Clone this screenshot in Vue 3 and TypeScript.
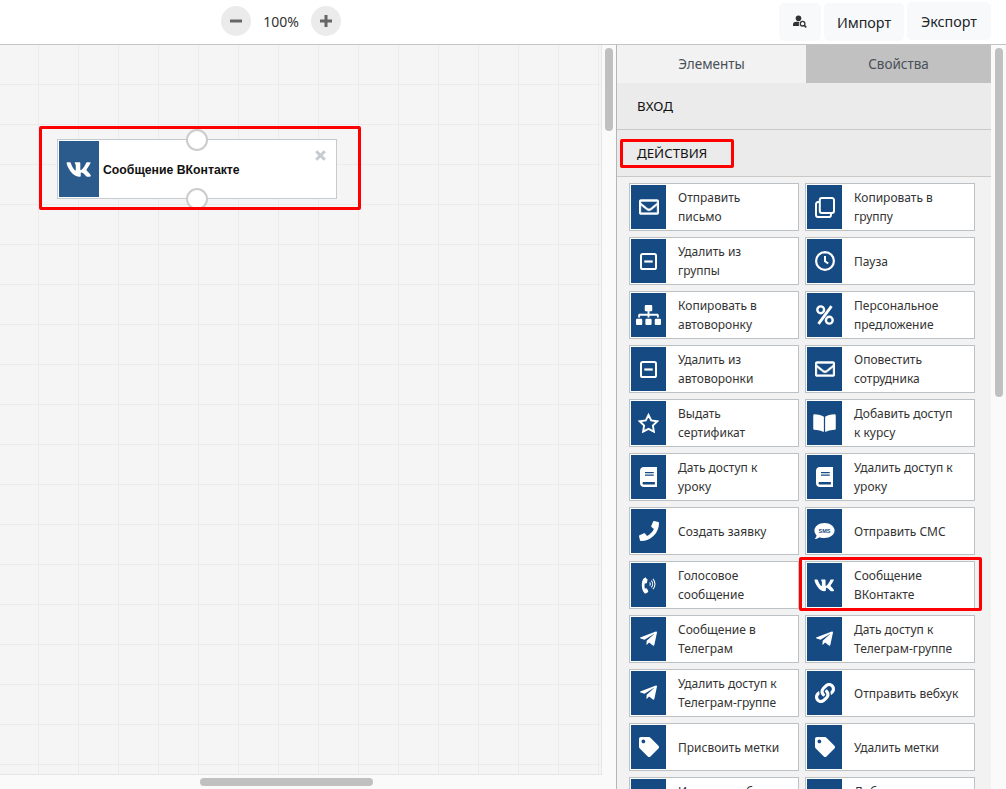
<script setup lang="ts">
interface Part { d: string; stroke?: number; bold?: number }
interface Icon { vb: string; w: number; h: number; parts: Part[]; sms?: boolean }

const envelope: Icon = { vb: '0 0 512 512', w: 20, h: 20, parts: [{ bold: 12, d: 'M464 64H48C21.49 64 0 85.49 0 112v288c0 26.51 21.49 48 48 48h416c26.51 0 48-21.49 48-48V112c0-26.51-21.49-48-48-48zm0 48v40.805c-22.422 18.259-58.168 46.651-134.587 106.49-16.841 13.247-50.201 45.072-73.413 44.701-23.208.375-56.579-31.459-73.413-44.701C106.18 199.465 70.425 171.067 48 152.805V112h416zM48 400V214.398c22.914 18.251 55.409 43.862 104.938 82.646 21.857 17.205 60.134 55.186 103.062 54.955 42.717.231 80.509-37.199 103.053-54.947 49.528-38.783 82.032-64.401 104.947-82.653V400H48z' }] }
const copy: Icon = { vb: '0 0 20 21', w: 20, h: 21, parts: [{ d: 'M6.800 1.100h10.200a2 2 0 0 1 2 2v10.800a2 2 0 0 1-2 2H6.800a2 2 0 0 1-2-2V3.100a2 2 0 0 1 2-2z', stroke: 2 }, { d: 'M4.800 5.100H3a2 2 0 0 0-2 2v11a2 2 0 0 0 2 2h11a2 2 0 0 0 2-2v-2.200', stroke: 2 }] }
const minus: Icon = { vb: '0 0 17 17', w: 17, h: 17, parts: [{ d: 'M2.600 1h11.800a1.600 1.600 0 0 1 1.600 1.600v11.800a1.600 1.600 0 0 1-1.600 1.600H2.600A1.600 1.600 0 0 1 1 14.400V2.600A1.600 1.600 0 0 1 2.600 1z', stroke: 2 }, { d: 'M4.300 8.500h8.400', stroke: 2.200 }] }
const clock: Icon = { vb: '0 0 20 20', w: 20, h: 20, parts: [{ d: 'M10 1.100a8.900 8.900 0 1 0 0 17.800a8.900 8.900 0 0 0 0-17.800z', stroke: 2.200 }, { d: 'M10 5v5.300l3.200 2.200', stroke: 2 }] }
const sitemap: Icon = { vb: '0 0 640 512', w: 25, h: 20, parts: [{ d: 'M128 352H32c-17.67 0-32 14.33-32 32v96c0 17.67 14.33 32 32 32h96c17.67 0 32-14.33 32-32v-96c0-17.67-14.33-32-32-32zm-24-80h192v48h48v-48h192v48h48v-57.59c0-21.17-17.23-38.41-38.41-38.41H344v-64h40c17.67 0 32-14.33 32-32V32c0-17.67-14.33-32-32-32H256c-17.67 0-32 14.33-32 32v96c0 17.67 14.33 32 32 32h40v64H94.41C73.23 224 56 241.23 56 262.41V320h48v-48zm264 80h-96c-17.67 0-32 14.33-32 32v96c0 17.67 14.33 32 32 32h96c17.67 0 32-14.33 32-32v-96c0-17.67-14.33-32-32-32zm240 0h-96c-17.67 0-32 14.33-32 32v96c0 17.67 14.33 32 32 32h96c17.67 0 32-14.33 32-32v-96c0-17.67-14.33-32-32-32z' }] }
const percent: Icon = { vb: '0 0 18 20', w: 18, h: 20, parts: [{ d: 'M4.700 1.400a3.400 3.400 0 1 0 0 6.800a3.400 3.400 0 0 0 0-6.800zM13.300 11.800a3.400 3.400 0 1 0 0 6.800a3.400 3.400 0 0 0 0-6.800z', stroke: 2.400 }, { d: 'M15.500 1.200L2.500 18.800', stroke: 2.800 }] }
const star: Icon = { vb: '0 0 22 21', w: 21, h: 20, parts: [{ d: 'M11 2l2.800 5.800 6.400.9-4.600 4.500 1.100 6.400L11 16.600l-5.700 3 1.100-6.400L1.800 8.700l6.400-.9z', stroke: 2 }] }
const bookOpen: Icon = { vb: '0 0 576 512', w: 23, h: 20, parts: [{ d: 'M542.22 32.05c-54.8 3.11-163.72 14.43-230.96 55.59-4.64 2.84-7.27 7.89-7.27 13.17v363.87c0 11.55 12.63 18.85 23.28 13.49 69.18-34.82 169.23-44.32 218.7-46.92 16.89-.89 30.02-14.43 30.02-30.66V62.75c.01-17.71-15.35-31.74-33.77-30.7zM264.73 87.64C197.5 46.48 88.58 35.17 33.78 32.05 15.36 31.01 0 45.04 0 62.75V400.6c0 16.24 13.13 29.78 30.02 30.66 49.49 2.6 149.59 12.11 218.77 46.95 10.62 5.35 23.21-1.94 23.21-13.46V100.63c0-5.29-2.62-10.25-7.27-12.99z' }] }
const book: Icon = { vb: '0 0 448 512', w: 17.5, h: 20, parts: [{ d: 'M448 360V24c0-13.3-10.7-24-24-24H96C43 0 0 43 0 96v320c0 53 43 96 96 96h328c13.3 0 24-10.7 24-24v-16c0-7.500-3.500-14.300-8.900-18.700-4.200-15.400-4.200-59.300 0-74.700 5.400-4.300 8.900-11.100 8.900-18.600zM128 134c0-3.300 2.700-6 6-6h212c3.300 0 6 2.700 6 6v20c0 3.300-2.700 6-6 6H134c-3.300 0-6-2.700-6-6v-20zm0 64c0-3.300 2.700-6 6-6h212c3.300 0 6 2.700 6 6v20c0 3.300-2.700 6-6 6H134c-3.300 0-6-2.700-6-6v-20zm253.400 250H96c-17.700 0-32-14.300-32-32 0-17.600 14.400-32 32-32h285.400c-1.900 17.100-1.900 46.900 0 64z' }] }
const phoneD = 'M493.4 24.6l-104-24c-11.300-2.600-22.900 3.300-27.500 13.900l-48 112c-4.200 9.800-1.400 21.300 6.900 28l60.600 49.600c-36 76.700-98.900 140.500-177.200 177.200l-49.600-60.600c-6.800-8.300-18.200-11.100-28-6.900l-112 48C3.900 366.500-2 378.100.6 389.400l24 104C27.100 504.200 36.700 512 48 512c256.100 0 464-207.500 464-464 0-11.200-7.700-20.900-18.600-23.400z'
const phone: Icon = { vb: '0 0 512 512', w: 20, h: 20, parts: [{ d: phoneD }] }
const sms: Icon = { vb: '0 0 21 19', w: 21, h: 19, sms: true, parts: [{ d: 'M10.500 1C4.900 1 .4 4.400.4 8.600c0 1.800.8 3.500 2.200 4.800-.3 1.500-1.200 2.700-2 3.700 1.900-.1 3.600-.8 4.900-1.900 1.500.6 3.200.9 5 .9 5.600 0 10.100-3.300 10.100-7.500S16.100 1 10.500 1z' }] }
const phoneVol: Icon = { vb: '0 0 16 20', w: 15, h: 19, parts: [{ d: 'M5.300 1.200 3.200 2.300C.3 4.300-.2 13.800 3.600 18c.6.700 1.400.7 2 .3l1.700-1.200c.5-.4.6-1 .3-1.500l-1.200-2.200c-.3-.5-.9-.7-1.400-.4l-.8.400c-.6-1.500-.6-4.300-.1-5.800l.9.200c.6.100 1.100-.2 1.300-.8l.6-2.600c.2-.6-.1-1.200-.6-1.500l-.7-.4c-.1-.3-.1-.3-.3-.3z' }, { d: 'M9.300 6.700a2.600 2.600 0 0 1 0 3.400', stroke: 1.100 }, { d: 'M11 4.900a5 5 0 0 1 0 7', stroke: 1.100 }, { d: 'M12.700 3a7.700 7.700 0 0 1 0 10.800', stroke: 1.100 }] }
const vkD = 'M545 117.700c3.700-12.500 0-21.700-17.800-21.700h-58.900c-15 0-21.900 7.900-25.600 18.700-16.100 47.300-59.300 111.200-97.500 147.100-5.500 7.900-8.300 10.400-16.600 10.400-4.600 0-11.800-4.800-11.800-17.500V117.700c0-15-4.200-21.700-16.600-21.700h-92.600c-9.400 0-15 7-15 13.500 0 14.200 21.200 17.500 23.400 57.500v86.800c0 19-3.400 22.500-10.900 22.500-20 0-68.600-73.400-97.400-157.400-5.800-16.300-11.500-22.900-26.600-22.900H32.600C15.800 96 12.400 103.900 12.400 112.700c0 15.600 20 93.200 93.100 195.700 48.800 70 117.400 108 180 108 37.500 0 42.100-8.400 42.100-22.900 0-66.800-3.400-73.100 15.400-73.100 8.700 0 23.700 4.400 58.700 38.200 40 40 46.600 57.800 69 57.800h58.900c16.800 0 25.300-8.400 20.400-25-11.200-34.900-86.900-106.700-90.300-111.500-8.700-11.200-6.200-16.200 0-26.200.1-.1 72-101.300 79.400-135.600z'
const vk: Icon = { vb: '0 0 576 512', w: 21, h: 18.700, parts: [{ d: vkD }] }
const tg: Icon = { vb: '0 0 448 512', w: 17, h: 19.400, parts: [{ d: 'M446.700 98.600l-67.600 318.800c-5.100 22.500-18.400 28.100-37.300 17.500l-103-75.900-49.700 47.800c-5.500 5.500-10.100 10.100-20.700 10.100l7.400-104.900 190.900-172.500c8.300-7.400-1.800-11.500-12.900-4.100L117.800 284 16.200 252.200c-22.100-6.900-22.500-22.100 4.600-32.700L418.200 66.400c18.400-6.900 34.500 4.100 28.500 32.200z' }] }
const link: Icon = { vb: '0 0 512 512', w: 20, h: 20, parts: [{ d: 'M326.612 185.391c59.747 59.809 58.927 155.698.36 214.590-.11.12-.24.25-.36.37l-67.200 67.200c-59.270 59.270-155.699 59.262-214.960 0-59.270-59.260-59.270-155.700 0-214.960l37.106-37.106c9.840-9.840 26.786-3.300 27.294 10.606.648 17.722 3.826 35.527 9.690 52.721 1.986 5.822.567 12.262-3.783 16.612l-13.087 13.087c-28.026 28.026-28.905 73.660-1.155 101.960 28.024 28.579 74.086 28.749 102.325.51l67.200-67.190c28.191-28.191 28.073-73.757 0-101.830-3.701-3.694-7.429-6.564-10.341-8.569a16.037 16.037 0 0 1-6.947-12.606c-.396-10.567 3.348-21.456 11.698-29.806l21.054-21.055c5.521-5.521 14.182-6.199 20.584-1.731a152.482 152.482 0 0 1 20.522 17.197zM467.547 44.449c-59.261-59.262-155.690-59.270-214.960 0l-67.200 67.200c-.12.12-.25.25-.36.37-58.566 58.892-59.387 154.781.36 214.590a152.454 152.454 0 0 0 20.521 17.196c6.402 4.468 15.064 3.789 20.584-1.731l21.054-21.055c8.350-8.350 12.094-19.239 11.698-29.806a16.037 16.037 0 0 0-6.947-12.606c-2.912-2.005-6.640-4.875-10.341-8.569-28.073-28.073-28.191-73.639 0-101.830l67.200-67.190c28.239-28.239 74.300-28.069 102.325.51 27.750 28.300 26.872 73.934-1.155 101.960l-13.087 13.087c-4.350 4.350-5.769 10.790-3.783 16.612 5.864 17.194 9.042 34.999 9.690 52.721.509 13.906 17.454 20.446 27.294 10.606l37.106-37.106c59.271-59.259 59.271-155.699.001-214.959z' }] }
const tag: Icon = { vb: '0 0 512 512', w: 20, h: 20, parts: [{ d: 'M0 252.118V48C0 21.490 21.490 0 48 0h204.118a48 48 0 0 1 33.941 14.059l211.882 211.882c18.745 18.745 18.745 49.137 0 67.882L293.823 497.941c-18.745 18.745-49.137 18.745-67.882 0L14.059 286.059A48 48 0 0 1 0 252.118zM112 64c-26.510 0-48 21.490-48 48s21.490 48 48 48 48-21.490 48-48-21.490-48-48-48z' }] }

const items: { lines: string[]; icon: Icon }[] = [
  { lines: ['Отправить', 'письмо'], icon: envelope },
  { lines: ['Копировать в', 'группу'], icon: copy },
  { lines: ['Удалить из', 'группы'], icon: minus },
  { lines: ['Пауза'], icon: clock },
  { lines: ['Копировать в', 'автоворонку'], icon: sitemap },
  { lines: ['Персональное', 'предложение'], icon: percent },
  { lines: ['Удалить из', 'автоворонки'], icon: minus },
  { lines: ['Оповестить', 'сотрудника'], icon: envelope },
  { lines: ['Выдать', 'сертификат'], icon: star },
  { lines: ['Добавить доступ', 'к курсу'], icon: bookOpen },
  { lines: ['Дать доступ к', 'уроку'], icon: book },
  { lines: ['Удалить доступ к', 'уроку'], icon: book },
  { lines: ['Создать заявку'], icon: phone },
  { lines: ['Отправить СМС'], icon: sms },
  { lines: ['Голосовое', 'сообщение'], icon: phoneVol },
  { lines: ['Сообщение', 'ВКонтакте'], icon: vk },
  { lines: ['Сообщение в', 'Телеграм'], icon: tg },
  { lines: ['Дать доступ к', 'Телеграм-группе'], icon: tg },
  { lines: ['Удалить доступ к', 'Телеграм-группе'], icon: tg },
  { lines: ['Отправить вебхук'], icon: link },
  { lines: ['Присвоить метки'], icon: tag },
  { lines: ['Удалить метки'], icon: tag },
  { lines: ['Изменить объект', 'пользователя'], icon: minus },
  { lines: ['Добавить в', 'список'], icon: minus }
]
</script>

<template>
  <div class="page">
    <header class="topbar">
      <div class="zoom">
        <button class="round" aria-label="minus"><svg width="12" height="12" viewBox="0 0 12 12"><path d="M0 6h12" stroke="#666" stroke-width="3" /></svg></button>
        <span class="pct">100%</span>
        <button class="round" aria-label="plus"><svg width="12" height="12" viewBox="0 0 12 12"><path d="M0 6h12M6 0v12" stroke="#666" stroke-width="3" /></svg></button>
      </div>
      <div class="actions">
        <button class="btn icon-btn" aria-label="search user">
          <svg width="14" height="14" viewBox="0 0 14 14">
            <circle cx="5.500" cy="3.200" r="2.800" fill="#333" />
            <path d="M0 11v-1.500C0 7.500 1.500 6.800 3.500 6.800h3c-.8.8-1 2.800-.2 4.200z" fill="#333" />
            <circle cx="9.600" cy="8.700" r="2.300" fill="none" stroke="#333" stroke-width="1.300" />
            <path d="M11.300 10.400 13.300 12.400" stroke="#333" stroke-width="1.500" />
          </svg>
        </button>
        <button class="btn import">Импорт</button>
        <button class="btn export">Экспорт</button>
      </div>
    </header>

    <main class="body">
      <section class="canvas-wrap">
        <div class="canvas">
          <div class="node">
            <div class="node-icon">
              <svg width="26" height="23" viewBox="0 0 576 512"><path :d="vkD" fill="#fff" /></svg>
            </div>
            <span class="node-title">Сообщение ВКонтакте</span>
            <svg class="node-x" width="11" height="11" viewBox="0 0 11 11"><path d="M1.200 1.200l8.600 8.600M9.800 1.200 1.200 9.800" stroke="#c6cbd0" stroke-width="3" /></svg>
            <i class="port port-top"></i>
            <i class="port port-bottom"></i>
          </div>
          <div class="mark mark-node"></div>
        </div>
        <div class="thumb thumb-v"></div>
        <div class="thumb thumb-h"></div>
      </section>

      <aside class="panel">
        <div class="tabs">
          <div class="tab active">Элементы</div>
          <div class="tab">Свойства</div>
        </div>
        <div class="section">ВХОД</div>
        <div class="section">ДЕЙСТВИЯ</div>
        <div class="grid">
          <div v-for="(item, i) in items" :key="i" class="card">
            <div class="card-icon">
              <svg :width="item.icon.w" :height="item.icon.h" :viewBox="item.icon.vb">
                <path
                  v-for="(p, j) in item.icon.parts"
                  :key="j"
                  :d="p.d"
                  :fill="p.stroke ? 'none' : '#fff'"
                  :stroke="p.stroke || p.bold ? '#fff' : 'none'"
                  :stroke-width="p.stroke || p.bold || 0"
                />
                <text v-if="item.icon.sms" x="10.500" y="10.800" text-anchor="middle" class="sms-text">SMS</text>
              </svg>
            </div>
            <div class="card-text">
              <div v-for="line in item.lines" :key="line">{{ line }}</div>
            </div>
          </div>
        </div>
        <div class="mark mark-section"></div>
        <div class="mark mark-card"></div>
      </aside>

      <div class="panel-scroll"><div class="panel-thumb"></div></div>
    </main>
  </div>
</template>

<style>
html, body { margin: 0; background: #fff; overflow: hidden; }
</style>

<style scoped>
.page {
  width: 1006px;
  height: 789px;
  overflow: hidden;
  font-family: "Noto Sans", sans-serif;
  display: flex;
  flex-direction: column;
}
.topbar {
  height: 44px;
  box-sizing: content-box;
  border-bottom: 1px solid #c4c4c4;
  display: flex;
  justify-content: space-between;
  flex: none;
}
.zoom {
  display: flex;
  align-items: center;
  gap: 0;
  padding-left: 221px;
  height: 42px;
}
.round {
  width: 30px;
  height: 30px;
  border: 0;
  padding: 0;
  border-radius: 50%;
  background: #ebebeb;
  display: flex;
  align-items: center;
  justify-content: center;
}
.pct {
  width: 60px;
  text-align: center;
  font-size: 14px;
  color: #333;
}
.actions {
  display: flex;
  padding-right: 15px;
  gap: 3px;
  align-items: flex-start;
}
.btn {
  border: 0;
  padding: 0;
  background: #f8f9fa;
  border-radius: 5px;
  font-family: inherit;
  font-size: 14.3px;
  color: #212529;
  height: 38px;
  margin-top: 3px;
  display: flex;
  align-items: center;
  justify-content: center;
}
.icon-btn { width: 42px; }
.import { width: 80px; }
.export { width: 84px; margin-top: 2px; }

.body {
  flex: 1;
  display: flex;
  min-height: 0;
}
.canvas-wrap {
  position: relative;
  width: 616px;
  flex: none;
  background: #fafafa;
  border-right: 1px solid #b5b5b5;
  overflow: hidden;
}
.canvas {
  position: relative;
  width: 602px;
  height: 730px;
  box-sizing: border-box;
  background-color: #f5f5f5;
  background-image:
    linear-gradient(to right, #ebebeb 1px, transparent 1px),
    linear-gradient(to bottom, #ebebeb 1px, transparent 1px);
  background-size: 40px 40px;
  background-position: 38px 39px;
  border-right: 1px solid #e6e6e6;
  border-bottom: 1px solid #e6e6e6;
}
.node {
  position: absolute;
  left: 57px;
  top: 94px;
  width: 280px;
  height: 60px;
  box-sizing: border-box;
  background: #fff;
  border: 1px solid #c3cad0;
  padding: 1px;
  display: flex;
  align-items: stretch;
}
.node-icon {
  width: 40px;
  background: #2b5b8d;
  display: flex;
  align-items: center;
  justify-content: center;
  flex: none;
}
.node-title {
  font-family: "Liberation Sans", Arial, sans-serif;
  font-weight: 700;
  font-size: 12.25px;
  color: #111;
  margin-left: 4px;
  align-self: center;
  position: relative;
  top: 1px;
}
.node-x {
  position: absolute;
  right: 10px;
  top: 10px;
}
.port {
  position: absolute;
  left: 128px;
  width: 22px;
  height: 22px;
  box-sizing: border-box;
  border-radius: 50%;
  background: #fff;
  border: 2px solid #cccccc;
}
.port-top { top: -11px; }
.port-bottom { bottom: -12px; }

.mark {
  position: absolute;
  box-sizing: border-box;
  border: 3px solid #fe0000;
  border-radius: 2px;
  pointer-events: none;
}
.mark-node {
  left: 39px;
  top: 81px;
  width: 322px;
  height: 84px;
}
.thumb {
  position: absolute;
  background: #c0c0c0;
  border-radius: 4px;
}
.thumb-v {
  left: 605px;
  top: 3px;
  width: 8px;
  height: 83px;
}
.thumb-h {
  left: 200px;
  bottom: 3px;
  width: 173px;
  height: 8px;
}

.panel {
  position: relative;
  width: 374px;
  flex: none;
  background: #f2f2f2;
  overflow: hidden;
}
.tabs {
  display: flex;
  height: 38px;
}
.tab {
  flex: 185;
  background: #c1c1c1;
  color: #495057;
  font-size: 13.5px;
  display: flex;
  align-items: center;
  justify-content: center;
}
.tab.active {
  flex: 0 0 189px;
  background: #f2f2f2;
}
.section {
  height: 46px;
  padding-left: 20px;
  background: #ebebeb;
  border-bottom: 1px solid #c9c9c9;
  font-size: 13.3px;
  color: #111;
  display: flex;
  align-items: center;
}
.grid {
  display: grid;
  grid-template-columns: 170px 170px;
  grid-auto-rows: 48px;
  gap: 6px;
  padding: 6px 0 0 12px;
}
.card {
  box-sizing: border-box;
  background: #fff;
  border: 1px solid #bcc1c6;
  padding: 1px;
  display: flex;
  align-items: stretch;
}
.card-icon {
  width: 35px;
  flex: none;
  background: #164a82;
  display: flex;
  align-items: center;
  justify-content: center;
}
.card-text {
  margin-left: 12px;
  align-self: center;
  font-size: 12px;
  line-height: 19px;
  color: #333;
  white-space: nowrap;
}
.sms-text {
  font-family: "Liberation Sans", sans-serif;
  font-size: 5.500px;
  font-weight: 700;
  fill: #164a82;
}
.mark-section {
  left: 3px;
  top: 94px;
  width: 114px;
  height: 29px;
}
.mark-card {
  left: 182px;
  top: 512px;
  width: 183px;
  height: 54px;
}
.panel-scroll {
  flex: 1;
  background: #fafafa;
  position: relative;
}
.panel-thumb {
  position: absolute;
  left: 4px;
  top: 3px;
  width: 8px;
  height: 349px;
  border-radius: 4px;
  background: #c0c0c0;
}
</style>
